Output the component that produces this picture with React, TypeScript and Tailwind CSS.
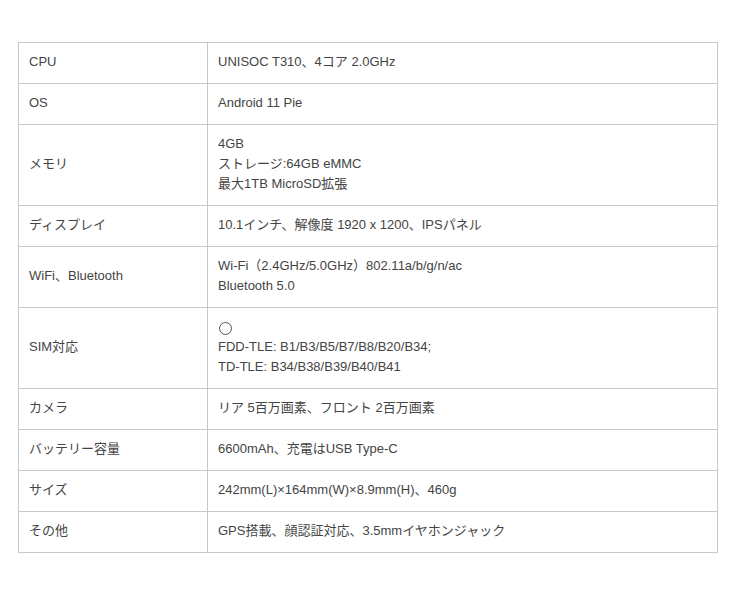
const rows: [string, string[]][] = [
  ["CPU", ["UNISOC T310、4コア 2.0GHz"]],
  ["OS", ["Android 11 Pie"]],
  ["メモリ", ["4GB", "ストレージ:64GB eMMC", "最大1TB MicroSD拡張"]],
  ["ディスプレイ", ["10.1インチ、解像度 1920 x 1200、IPSパネル"]],
  ["WiFi、Bluetooth", ["Wi-Fi（2.4GHz/5.0GHz）802.11a/b/g/n/ac", "Bluetooth 5.0"]],
  ["SIM対応", ["◯", "FDD-TLE: B1/B3/B5/B7/B8/B20/B34;", "TD-TLE: B34/B38/B39/B40/B41"]],
  ["カメラ", ["リア 5百万画素、フロント 2百万画素"]],
  ["バッテリー容量", ["6600mAh、充電はUSB Type-C"]],
  ["サイズ", ["242mm(L)×164mm(W)×8.9mm(H)、460g"]],
  ["その他", ["GPS搭載、顔認証対応、3.5mmイヤホンジャック"]],
];

export default function App() {
  return (
    <div className="min-h-screen bg-white pt-[42px] pl-[18px] font-['Liberation_Sans','Noto_Sans_CJK_JP',sans-serif] text-[13px] leading-5 text-[#444]">
      <table className="w-[700px] border-collapse">
        <tbody>
          {rows.map(([label, lines]) => (
            <tr key={label}>
              <td className="w-[189px] border border-[#c8c8c8] px-[10px] pt-[9px] pb-[11px] align-middle">{label}</td>
              <td className="border border-[#c8c8c8] px-[10px] pt-[9px] pb-[11px] align-middle">
                {lines.map((l) =>
                  l === "◯" ? (
                    <div key={l} className="h-5 pt-[5px]" aria-label="◯">
                      <span className="block w-[13px] h-[13px] ml-[1px] rounded-full border border-[#555]" />
                    </div>
                  ) : (
                    <div key={l}>{l}</div>
                  )
                )}
              </td>
            </tr>
          ))}
        </tbody>
      </table>
    </div>
  );
}
